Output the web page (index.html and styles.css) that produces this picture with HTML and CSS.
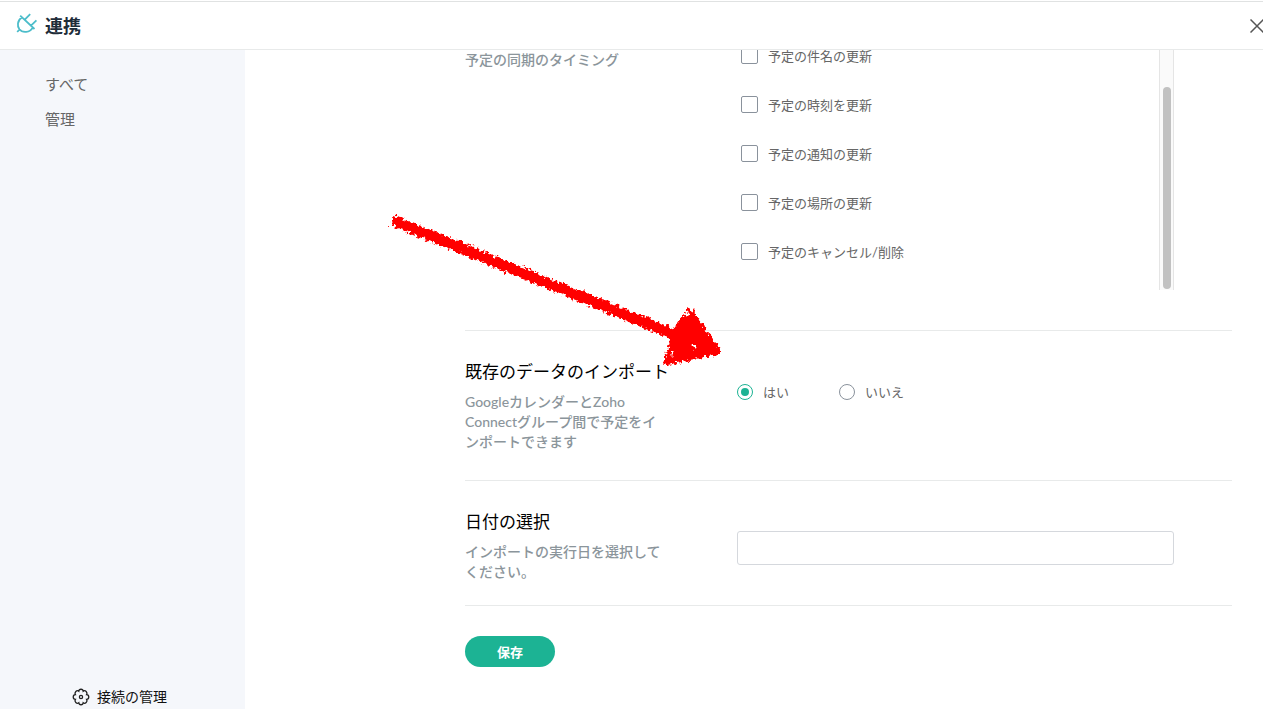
FILE: index.html
```html
<!DOCTYPE html>
<html lang="ja">

<head>
    <meta charset="UTF-8">
    <meta name="viewport" content="width=device-width, initial-scale=1.0">
    <title>連携</title>
    <link rel="stylesheet" href="styles.css">
</head>

<body>
    <header class="header">
        <svg class="logo" viewBox="0 0 22 22" width="22" height="22">
            <path d="M4.2 2.7L18.5 16M5.8 4.6C1.2 7.5 1 13 3.4 16.3C6.5 20.3 14 19.8 16.6 14.6M3.6 16.4L1.2 19M9 6.4L14.2 1.2M15 12.6L20.4 7.4" />
        </svg>
        <h1>連携</h1>
        <button class="close" type="button" aria-label="閉じる">
            <svg viewBox="0 0 14 14" width="14" height="14">
                <path d="M0.5 0.5L13.5 13.5M13.5 0.5L0.5 13.5" />
            </svg>
        </button>
    </header>

    <div class="wrapper">
        <nav class="sidebar">
            <a href="#">すべて</a>
            <a href="#">管理</a>
            <a class="manage" href="#">
                <svg viewBox="0 0 18 18" width="18" height="18">
                    <path d="M6.8 3.2C7 0.6 11 0.6 11.2 3.2C13.2 1.6 16 4.4 14.6 6.6C17.5 6.8 17.5 11.2 14.6 11.4C16 13.6 13.2 16.4 11.2 14.8C11 17.4 7 17.4 6.8 14.8C4.8 16.4 2 13.6 3.4 11.4C0.5 11.2 0.5 6.8 3.4 6.6C2 4.4 4.8 1.6 6.8 3.2Z" />
                    <circle cx="9" cy="9" r="1.6" />
                </svg>
                接続の管理
            </a>
        </nav>

        <main class="content">
            <form>
                <section class="row timing">
                    <div class="info">
                        <p id="timing">予定の同期のタイミング</p>
                    </div>
                    <div class="scroll-box" role="group" aria-labelledby="timing">
                        <div class="list">
                            <label><input type="checkbox">予定の件名の更新</label>
                            <label><input type="checkbox">予定の時刻を更新</label>
                            <label><input type="checkbox">予定の通知の更新</label>
                            <label><input type="checkbox">予定の場所の更新</label>
                            <label><input type="checkbox">予定のキャンセル/削除</label>
                        </div>
                        <div class="track">
                            <div class="thumb"></div>
                        </div>
                    </div>
                </section>

                <section class="row">
                    <div class="info">
                        <h2 id="import">既存のデータのインポート</h2>
                        <p>GoogleカレンダーとZoho Connectグループ間で予定をインポートできます</p>
                    </div>
                    <div class="control radios" role="radiogroup" aria-labelledby="import">
                        <label><input type="radio" name="import" checked>はい</label>
                        <label><input type="radio" name="import">いいえ</label>
                    </div>
                </section>

                <section class="row date">
                    <div class="info">
                        <h2><label for="date">日付の選択</label></h2>
                        <p>インポートの実行日を選択してください。</p>
                    </div>
                    <div class="control">
                        <input class="text" type="text" id="date">
                    </div>
                </section>

                <button class="save" type="submit">保存</button>
            </form>
        </main>
    </div>

    <svg class="arrow" viewBox="0 0 350 180" width="350" height="180">
        <filter id="rough" x="-5%" y="-5%" width="110%" height="110%">
            <feTurbulence type="fractalNoise" baseFrequency="0.3" numOctaves="2" seed="4" result="noise" />
            <feDisplacementMap in="SourceGraphic" in2="noise" scale="8" xChannelSelector="R" yChannelSelector="G" />
            <feGaussianBlur stdDeviation="0.4" />
        </filter>
        <g filter="url(#rough)">
            <path class="shaft" d="M12 20L300 137" />
            <path class="head" d="M309 111L338 151L287 162L295 134Z" />
            <path class="gap" d="M307 113v3M314 146v1M292 153v2" />
        </g>
    </svg>
</body>

</html>
```

FILE: styles.css
```css
* {
    box-sizing: border-box;
}

body {
    margin: 0;
    height: 100vh;
    display: flex;
    flex-direction: column;
    overflow: hidden;
    font-family: Lato, "Noto Sans CJK JP", sans-serif;
    font-size: 13px;
    color: #666;
    background: #fff;
}

h1,
h2,
p {
    margin: 0;
}

svg {
    fill: none;
    flex-shrink: 0;
}

.header {
    display: flex;
    align-items: center;
    height: 49px;
    margin-top: 1px;
    padding-left: 16px;
    border-top: 1px solid #e0e2e2;
    border-bottom: 1px solid #e8eaea;
    flex-shrink: 0;
}

.logo {
    stroke: #4cbdca;
    stroke-width: 1.8;
    margin-right: 7px;
    margin-bottom: 4px;
}

h1 {
    font-size: 18px;
    line-height: 24px;
    color: #1f2d3a;
}

.close {
    display: flex;
    margin-left: auto;
    margin-right: -1px;
    padding: 0;
    border: none;
    background: none;
    stroke: #555;
    stroke-width: 1.5;
    cursor: pointer;
}

.wrapper {
    display: flex;
    flex: 1;
    min-height: 0;
}

.sidebar {
    display: flex;
    flex-direction: column;
    width: 245px;
    padding-top: 17px;
    background: #f5f7fb;
    flex-shrink: 0;
}

.sidebar a {
    padding-left: 45px;
    font-size: 15px;
    line-height: 35px;
    color: #666;
    text-decoration: none;
}

.sidebar .manage {
    display: flex;
    align-items: center;
    gap: 7px;
    margin-top: auto;
    padding-left: 72px;
    font-size: 14px;
    line-height: 24px;
    color: #111;
}

.manage svg {
    stroke: #222;
    stroke-width: 1.3;
}

.content {
    flex: 1;
    padding: 0 31px 0 220px;
    overflow: auto;
}

.row {
    display: flex;
    border-bottom: 1px solid #e8eaea;
}

.info {
    width: 272px;
    padding: 29px 0 28px;
    flex-shrink: 0;
}

.date .info {
    padding-bottom: 23px;
}

.info h2 {
    margin-bottom: 8px;
    font-size: 17px;
    font-weight: normal;
    line-height: 24px;
    color: #000;
}

.info p {
    width: 200px;
    font-size: 14px;
    font-weight: 500;
    line-height: 20px;
    color: #8b959b;
}

.timing {
    padding-bottom: 40px;
}

.timing .info {
    padding: 0;
}

.scroll-box {
    display: flex;
    flex: 1;
    height: 240px;
    margin-right: 58px;
}

/* scrolled down to the last item */
.list {
    display: flex;
    flex-direction: column;
    justify-content: flex-end;
    flex: 1;
    padding: 0 0 14px 4px;
    overflow: hidden;
}

.list label {
    display: flex;
    align-items: center;
    gap: 10px;
    height: 49px;
    flex-shrink: 0;
}

.track {
    display: flex;
    width: 15px;
    padding: 37px 2px 1px 3px;
    background: #fafafa;
    border-left: 1px solid #e5e5e5;
    border-right: 1px solid #e5e5e5;
}

.thumb {
    flex: 1;
    border-radius: 4px;
    background: #c1c1c1;
}

input {
    margin: 0;
}

input[type="checkbox"],
input[type="radio"] {
    appearance: none;
    width: 17px;
    height: 17px;
    border: 1px solid #8a929c;
    border-radius: 2px;
    background: #fff;
}

input[type="radio"] {
    width: 16px;
    height: 16px;
    border-radius: 50%;
}

input[type="radio"]:checked {
    border-color: #1cb394;
    background: #1cb394;
    background-clip: content-box;
    padding: 3px;
}

input[type="checkbox"]:checked {
    background: #1cb394;
}

.control {
    flex: 1;
    margin-right: 58px;
    padding-top: 50px;
}

.radios {
    display: flex;
    align-items: flex-start;
    gap: 50px;
}

.radios label {
    display: flex;
    align-items: center;
    gap: 10px;
    line-height: 22px;
}

.text {
    display: block;
    width: 100%;
    height: 34px;
    padding: 0 10px;
    border: 1px solid #d5d8dd;
    border-radius: 3px;
    font: inherit;
}

.save {
    display: block;
    width: 90px;
    height: 31px;
    margin: 30px 0;
    padding: 0;
    border: none;
    border-radius: 16px;
    font: inherit;
    font-weight: bold;
    color: #fff;
    background: #1cb394;
    cursor: pointer;
}

.arrow {
    position: absolute;
    top: 200px;
    left: 380px;
    pointer-events: none;
}

.shaft {
    stroke: #f00;
    stroke-width: 11;
}

.head {
    fill: #f00;
    stroke: #f00;
    stroke-width: 6;
    stroke-linejoin: round;
}

.gap {
    stroke: #fff;
    stroke-width: 3;
    stroke-linecap: round;
}
```
